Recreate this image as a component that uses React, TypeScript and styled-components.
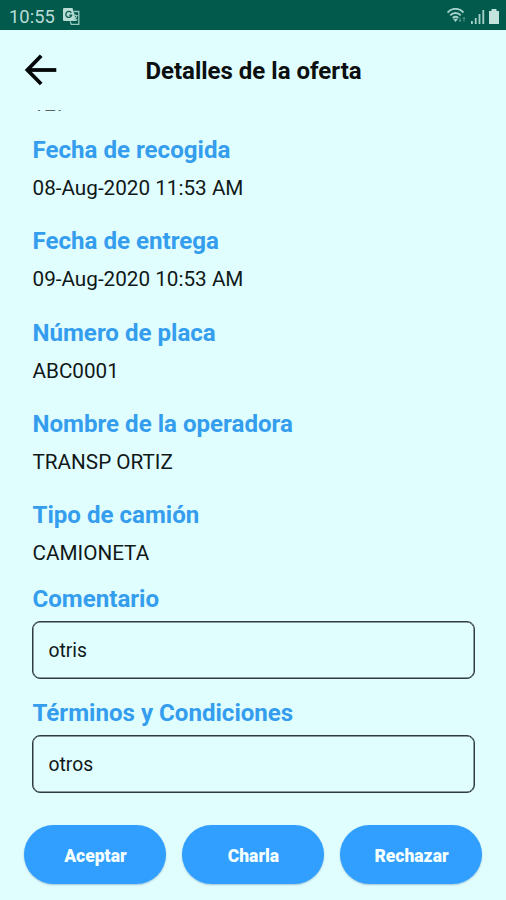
import React from "react";
import styled, { createGlobalStyle } from "styled-components";

const GlobalStyle = createGlobalStyle`
  * { box-sizing: border-box; }
  body { margin: 0; background: #e1feff; font-family: Roboto, "Liberation Sans", sans-serif; }
`;

const Screen = styled.div`
  width: 506px;
  height: 900px;
  overflow: hidden;
  display: flex;
  flex-direction: column;
  background: #e1feff;
  color: #101818;
`;

const StatusBar = styled.div`
  height: 30px;
  flex: none;
  display: flex;
  align-items: center;
  justify-content: space-between;
  padding: 2px 7px 0 9px;
  background: #015a4c;
  color: #b9dcd6;
  font-size: 18.4px;
`;

const StatusGroup = styled.div<{ $gap: number }>`
  display: flex;
  align-items: center;
  gap: ${(p) => p.$gap}px;
`;

const Header = styled.header`
  height: 80px;
  flex: none;
  display: grid;
  grid-template-columns: 34px 1fr 34px;
  align-items: start;
  padding: 23px 23px 0 24px;
`;

const BackButton = styled.button`
  width: 34px;
  height: 34px;
  padding: 0;
  border: 0;
  background: none;
  display: block;
`;

const Title = styled.h1`
  margin: 0;
  text-align: center;
  font-size: 24px;
  line-height: 37px;
  font-weight: 700;
  color: #0b0f10;
`;

const Content = styled.main`
  flex: 1;
  overflow: hidden;
  padding: 0 31px 0 32.5px;
`;

const ScrolledValue = styled.div`
  height: 2px;
  overflow: hidden;
  display: flex;
  align-items: flex-end;
  margin-bottom: 22px;
  font-size: 20.7px;
  line-height: 15px;
  color: #566468;
`;

const Field = styled.section<{ $height: number }>`
  height: ${(p) => p.$height}px;
`;

const Label = styled.h2`
  margin: 0;
  font-size: 24.1px;
  line-height: 32px;
  font-weight: 700;
  color: #349ded;
`;

const Value = styled.div`
  margin-top: 6px;
  font-size: 20.7px;
  line-height: 32px;
`;

const TextBox = styled.div`
  height: 58px;
  margin: 6.5px 0 0 -0.5px;
  padding: 1px 15.5px 0;
  display: flex;
  align-items: center;
  border: 1px solid #303b3e;
  box-shadow: inset 0 0 0 0.5px #303b3e;
  border-radius: 8px;
  font-size: 19.3px;
`;

const Actions = styled.footer`
  flex: none;
  height: 75px;
  display: grid;
  grid-template-columns: repeat(3, 142px);
  justify-content: space-between;
  align-items: start;
  padding: 0 23.5px 0 24.4px;
`;

const ActionButton = styled.button`
  height: 59px;
  padding: 2px 0 0;
  border: 0;
  border-radius: 30px;
  background: #309fff;
  color: #f5ffff;
  font: 900 17.5px Roboto, "Liberation Sans", sans-serif;
  box-shadow: 0 1px 2px rgba(40, 90, 130, 0.35);
`;

const BackArrow = () => (
  <svg width="34" height="34" viewBox="0 0 34 34" fill="none" stroke="#050808">
    <path d="M32.3 17H4" strokeWidth="3.8" />
    <path d="M17.2 2.8L3.4 17l13.8 14" strokeWidth="3.8" />
  </svg>
);

const TranslateIcon = () => (
  <svg width="17" height="17" viewBox="0 0 17 17" fill="none">
    <path d="M1.5 0h8l4 13H1.5A1.3 1.3 0 0 1 0 11.7V1.3A1.3 1.3 0 0 1 1.5 0Z" fill="#b9dcd6" />
    <path d="M8.3 4.8a3 3 0 1 0 .4 2.4H6.2" stroke="#015a4c" strokeWidth="1.3" />
    <path d="M11 3.5h4.8v12.8H8.2l-1-2.8" stroke="#9bc8c0" strokeWidth="1.3" />
    <path d="M9.6 7.5h5.2M12.2 6.2v1.3M14 7.5c-.4 2.2-2 4-3.5 5M11 9l3.3 3.4" stroke="#9bc8c0" strokeWidth="1.2" />
  </svg>
);

const WifiIcon = () => (
  <svg width="20" height="16" viewBox="0 0 20 16" fill="none" stroke="#a7d2ca">
    <path d="M.5 4.5C4.8-.4 12.2-.4 16.5 4.5M3.2 7.3c2.9-3 7.7-3 10.6 0M5.8 10c1.6-1.6 3.8-1.6 5.4 0" strokeWidth="1.9" />
    <path d="M8.5 13.8L6.5 11h4Z" fill="#a7d2ca" strokeWidth=".5" />
    <path d="M13 9.5v4m-1-1.3 1 1.3 1-1.3M17 13.5v-4m-1 1.3 1-1.3 1 1.3" stroke="#5f9f93" strokeWidth=".9" />
  </svg>
);

const SignalIcon = () => (
  <svg width="14" height="15" viewBox="0 0 14 15" fill="#a7d2ca">
    <path d="M0 12h1.8v3H0zM3.8 9h1.8v6H3.8zM7.6 5h1.8v10H7.6zM11.4 1h1.8v14h-1.8z" />
  </svg>
);

const BatteryIcon = () => (
  <svg width="10" height="15" viewBox="0 0 10 15" fill="#c5e3dd">
    <path d="M2.5 0h5v2H10v13H0V2h2.5z" />
  </svg>
);

const details = [
  { label: "Fecha de recogida", value: "08-Aug-2020 11:53 AM", height: 91.4 },
  { label: "Fecha de entrega", value: "09-Aug-2020 10:53 AM", height: 91.4 },
  { label: "Número de placa", value: "ABC0001", height: 91.4 },
  { label: "Nombre de la operadora", value: "TRANSP ORTIZ", height: 91.2 },
  { label: "Tipo de camión", value: "CAMIONETA", height: 83.6 },
];

export default function App() {
  return (
    <>
      <GlobalStyle />
      <Screen>
        <StatusBar>
          <StatusGroup $gap={8}>
            <span>10:55</span>
            <TranslateIcon />
          </StatusGroup>
          <StatusGroup $gap={4}>
            <WifiIcon />
            <SignalIcon />
            <BatteryIcon />
          </StatusGroup>
        </StatusBar>
        <Header>
          <BackButton aria-label="Volver">
            <BackArrow />
          </BackButton>
          <Title>Detalles de la oferta</Title>
        </Header>
        <Content>
          <ScrolledValue>127</ScrolledValue>
          {details.map((d) => (
            <Field key={d.label} $height={d.height}>
              <Label>{d.label}</Label>
              <Value>{d.value}</Value>
            </Field>
          ))}
          <Field $height={114}>
            <Label>Comentario</Label>
            <TextBox>otris</TextBox>
          </Field>
          <Field $height={97}>
            <Label>Términos y Condiciones</Label>
            <TextBox>otros</TextBox>
          </Field>
        </Content>
        <Actions>
          <ActionButton>Aceptar</ActionButton>
          <ActionButton>Charla</ActionButton>
          <ActionButton>Rechazar</ActionButton>
        </Actions>
      </Screen>
    </>
  );
}
